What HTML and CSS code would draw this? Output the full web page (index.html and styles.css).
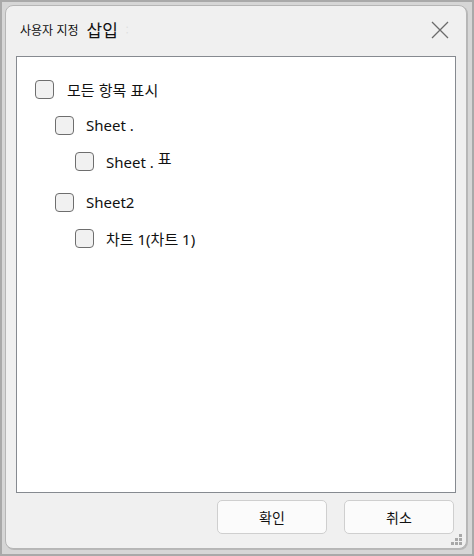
FILE: index.html
```html
<!DOCTYPE html>
<html lang="ko">
<head>
<meta charset="utf-8">
<link rel="stylesheet" href="styles.css">
</head>
<body>
<div class="frame">
  <div class="dialog">
    <div class="titlebar">
      <span class="t-small">사용자 지정</span>
      <span class="t-big">삽입</span>
      <span class="t-dot">:</span>
      <svg class="close" width="18" height="18" viewBox="0 0 18 18"><path d="M1 1 L17 17 M17 1 L1 17" stroke="#6b6b6b" stroke-width="1.3" fill="none"/></svg>
    </div>
    <div class="list">
      <div class="row lv0"><span class="cb"></span><span class="lbl big">모든 항목 표시</span></div>
      <div class="row lv1"><span class="cb"></span><span class="lbl">Sheet .</span></div>
      <div class="row lv2"><span class="cb"></span><span class="lbl">Sheet .<span class="pyo">표</span></span></div>
      <div class="row lv1 grp"><span class="cb"></span><span class="lbl">Sheet2</span></div>
      <div class="row lv2"><span class="cb"></span><span class="lbl">차트 1(차트 1)</span></div>
    </div>
    <div class="footer">
      <button class="btn">확인</button>
      <button class="btn">취소</button>
    </div>
    <svg class="grip" width="12" height="12" viewBox="0 0 12 12" fill="#a8a8a8">
      <rect x="8" y="0" width="3" height="3"/>
      <rect x="4" y="4" width="3" height="3"/><rect x="8" y="4" width="3" height="3"/>
      <rect x="0" y="8" width="3" height="3"/><rect x="4" y="8" width="3" height="3"/><rect x="8" y="8" width="3" height="3"/>
    </svg>
  </div>
</div>
</body>
</html>
```
FILE: styles.css
```css
* { box-sizing: border-box; }
html, body { margin: 0; padding: 0; }
body {
  width: 474px;
  height: 556px;
  overflow: hidden;
  font-family: "Noto Sans", "Noto Sans CJK KR", sans-serif;
  color: #1a1a1a;
}
.frame {
  width: 474px;
  height: 556px;
  border: 2px solid #a9a9a9;
  background: #d6d6d6;
  padding: 3px 5px 5px 3px;
}
.dialog {
  position: relative;
  height: 100%;
  background: #f0f0f0;
  border: 1px solid #b6b6b6;
  border-radius: 8px;
  box-shadow: 1px 1px 0 #b8b8b8;
  display: flex;
  flex-direction: column;
}
.titlebar {
  height: 50px;
  display: flex;
  align-items: center;
  padding: 0 17px 4px 14px;
  font-family: "Noto Sans CJK KR", sans-serif;
}
.t-small { font-size: 12px; color: #111; }
.t-big { font-size: 17px; margin-left: 8px; color: #111; }
.t-dot { font-size: 10px; color: #ddd; margin-left: 8px; }
.close { margin-left: auto; margin-top: 2px; }
.list {
  flex: 1;
  margin: 0 10px 0 10px;
  background: #fff;
  border: 1px solid #868a90;
  padding: 14px 0 0 0;
}
.row {
  height: 36px;
  display: flex;
  align-items: center;
}
.lv0 { padding-left: 18px; }
.lv1 { padding-left: 38px; }
.lv2 { padding-left: 58px; }
.grp { margin-top: 5px; }
.cb {
  width: 19px;
  height: 19px;
  border: 1px solid #6e6e6e;
  border-radius: 4px;
  background: #f1f1f1;
  flex: none;
}
.lbl {
  margin-left: 12px;
  font-size: 15px;
  color: #111;
  font-family: "Noto Sans", "Noto Sans CJK KR", sans-serif;
}
.lbl.big { font-size: 15px; margin-left: 13px; font-family: "Noto Sans CJK KR", sans-serif; }
.pyo { margin-left: 4px; font-family: "Noto Sans CJK KR", sans-serif; position: relative; top: -4px; }
.footer {
  height: 55px;
  display: flex;
  justify-content: flex-end;
  align-items: flex-start;
  gap: 17px;
  padding: 7px 12px 0 0;
}
.btn {
  width: 110px;
  height: 34px;
  background: #fbfbfb;
  border: 1px solid #cfcfcf;
  border-radius: 5px;
  font-family: "Noto Sans CJK KR", sans-serif;
  font-size: 14px;
  color: #111;
  padding: 0;
}
.grip { position: absolute; right: 3px; bottom: 2px; }
```
